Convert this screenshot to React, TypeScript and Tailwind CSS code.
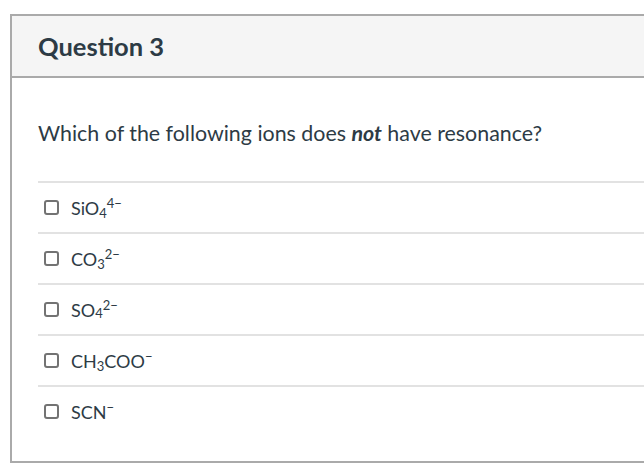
import React from "react";

type Answer = { key: string; label: React.ReactNode };

const ANSWERS: Answer[] = [
  {
    key: "sio4",
    label: (
      <>
        SiO<sub className="text-[13px]">4</sub>
        <sup className="text-[13px]">4−</sup>
      </>
    ),
  },
  {
    key: "co3",
    label: (
      <>
        CO<sub className="text-[13px]">3</sub>
        <sup className="text-[13px]">2−</sup>
      </>
    ),
  },
  {
    key: "so4",
    label: (
      <>
        SO<sub className="text-[13px] -bottom-[0.15em]">4</sub>
        <sup className="text-[13px]">2−</sup>
      </>
    ),
  },
  {
    key: "ch3coo",
    label: (
      <>
        CH<sub className="text-[13px]">3</sub>COO<sup className="text-[13px]">−</sup>
      </>
    ),
  },
  {
    key: "scn",
    label: (
      <>
        SCN<sup className="text-[13px]">−</sup>
      </>
    ),
  },
];

export default function App() {
  return (
    <div
      className="w-[644px] h-[466px] overflow-hidden bg-white pt-[14px] pl-[10px] text-[#2d3b45]"
      style={{ fontFamily: "Lato, 'Noto Sans', sans-serif" }}
    >
      <div className="w-[700px] border-2 border-r-0 border-[#aaaaaa]">
        {/* header */}
        <div className="h-[62px] bg-[#f5f5f5] border-b-2 border-[#aaaaaa] pl-[26px] flex items-center">
          <h2 className="text-[25.5px] font-bold leading-none pt-[1px]">Question 3</h2>
        </div>

        <div className="pl-[26px] pt-[41px] pb-[25px]">
          <p className="text-[21.4px] leading-[29px] mb-[33px]">
            Which of the following ions does <strong className="italic font-bold">not</strong> have resonance?
          </p>

          <div>
            {ANSWERS.map((a) => (
              <div key={a.key} className="border-t-2 border-[#e2e2e2] h-[51px] flex items-center pl-[6px]">
                <span className="w-[15px] h-[15px] border-2 border-[#737373] rounded-[3px] bg-white mr-[12px] shrink-0" />
                <span className="text-[18px] leading-none">{a.label}</span>
              </div>
            ))}
          </div>
        </div>
      </div>
    </div>
  );
}
